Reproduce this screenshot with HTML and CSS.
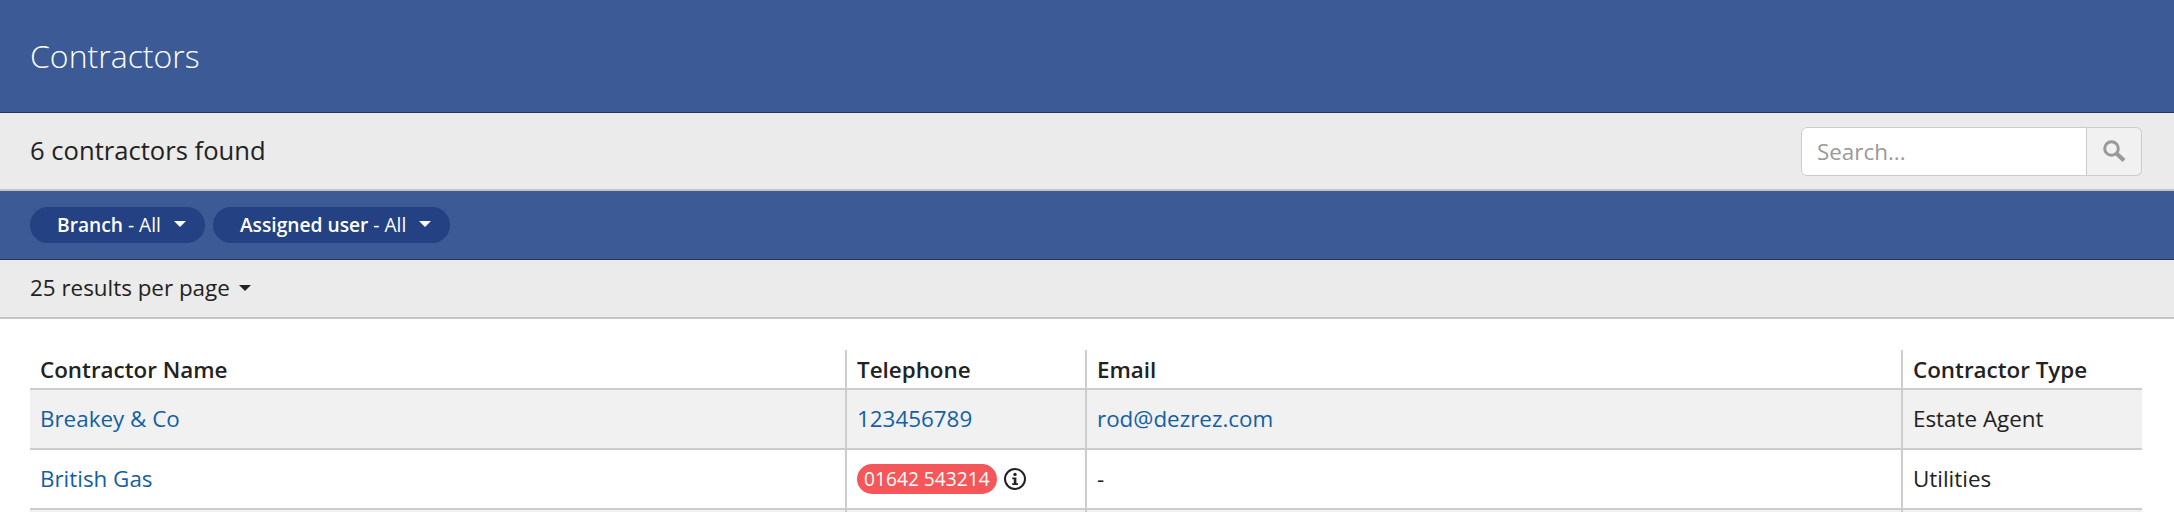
FILE: index.html

```html
<!DOCTYPE html>
<html lang="en">
<head>
    <meta charset="UTF-8">
    <title>Contractors</title>
    <link rel="stylesheet" href="styles.css">
</head>
<body>

    <div class="page-title">
        <h1>Contractors</h1>
    </div>

    <div class="results-bar">
        <span class="results-count">6 contractors found</span>
        <div class="search">
            <input class="search-input" type="text" placeholder="Search...">
            <button class="search-btn" aria-label="Search">
                <svg width="24" height="24" viewBox="0 0 24 24">
                    <circle cx="9.5" cy="9.5" r="6.8" fill="none" stroke="#999" stroke-width="3"/>
                    <path d="M14.5 14.5 L22 21.5" stroke="#999" stroke-width="4.2" fill="none"/>
                </svg>
            </button>
        </div>
    </div>

    <div class="filter-bar">
        <button class="filter-pill"><span><b>Branch</b> - All</span><i class="caret"></i></button>
        <button class="filter-pill"><span><b>Assigned user</b> - All</span><i class="caret"></i></button>
    </div>

    <div class="paging-bar">
        <span>25 results per page</span>
        <i class="caret caret-dark"></i>
    </div>

    <div class="table-wrap">
        <table class="contractors">
            <colgroup>
                <col class="col-name">
                <col class="col-tel">
                <col class="col-email">
                <col class="col-type">
            </colgroup>
            <thead>
                <tr>
                    <th>Contractor Name</th>
                    <th>Telephone</th>
                    <th>Email</th>
                    <th>Contractor Type</th>
                </tr>
            </thead>
            <tbody>
                <tr class="odd">
                    <td><a href="#">Breakey &amp; Co</a></td>
                    <td><a href="#">123456789</a></td>
                    <td><a href="#">rod@dezrez.com</a></td>
                    <td>Estate Agent</td>
                </tr>
                <tr>
                    <td><a href="#">British Gas</a></td>
                    <td>
                        <span class="phone-bad">01642 543214</span>
                        <svg class="info-icon" width="24" height="24" viewBox="0 0 24 24">
                            <circle cx="12" cy="12" r="10" fill="none" stroke="#222" stroke-width="2"/>
                            <circle cx="12" cy="7.4" r="1.7" fill="#222"/>
                            <path d="M9.2 10.4 H13.4 V16.2 H15 V18 H9.2 V16.2 H10.8 V12.2 H9.2 Z" fill="#222"/>
                        </svg>
                    </td>
                    <td>-</td>
                    <td>Utilities</td>
                </tr>
                <tr class="odd row-cut">
                    <td></td>
                    <td></td>
                    <td></td>
                    <td></td>
                </tr>
            </tbody>
        </table>
    </div>

</body>
</html>
```

FILE: styles.css

```css
* {
    box-sizing: border-box;
    margin: 0;
    padding: 0;
}
html, body {
    height: 512px;
    overflow: hidden;
}
body {
    font-family: "Open Sans", Arial, sans-serif;
    background-color: #fff;
    color: #222;
}
.page-title {
    height: 113px;
    padding: 0 30px 2px;
    display: flex;
    align-items: center;
    background-color: #3b5a96;
    border-bottom: 1px solid #1f3763;
}
.page-title h1 {
    font-size: 32px;
    font-weight: 300;
    color: #fff;
}
.results-bar {
    height: 78px;
    padding: 0 32px 0 30px;
    display: flex;
    align-items: center;
    justify-content: space-between;
    background-color: #ebebeb;
    border-bottom: 2px solid #c4c4c4;
}
.results-count {
    font-size: 25.6px;
    line-height: 1;
}
.search {
    display: flex;
    width: 341px;
    height: 49px;
}
.search-input {
    width: 286px;
    padding: 0 15px;
    font-family: inherit;
    font-size: 22.4px;
    color: #222;
    background-color: #fff;
    border: 1px solid #ccc;
    border-radius: 6px 0 0 6px;
}
.search-input::placeholder {
    color: #999;
    opacity: 1;
}
.search-btn {
    width: 55px;
    display: flex;
    align-items: center;
    justify-content: center;
    background-color: #f1f1f1;
    border: 1px solid #ccc;
    border-left: none;
    border-radius: 0 6px 6px 0;
}
.filter-bar {
    height: 69px;
    padding: 0 30px;
    display: flex;
    align-items: center;
    gap: 8px;
    background-color: #3b5a96;
    border-bottom: 1px solid #1f3763;
}
.filter-pill {
    height: 36px;
    padding: 0 19px 2px 27px;
    display: flex;
    align-items: center;
    font-family: inherit;
    font-size: 19.2px;
    color: #fff;
    background-color: #234183;
    border: none;
    border-radius: 18px;
}
.filter-pill b {
    font-weight: 600;
}
.caret {
    display: inline-block;
    margin-left: 13px;
    border-top: 6px solid #fff;
    border-left: 6px solid transparent;
    border-right: 6px solid transparent;
}
.caret-dark {
    margin-left: 9px;
    border-top-color: #222;
}
.paging-bar {
    height: 59px;
    padding: 0 30px 2px;
    display: flex;
    align-items: center;
    font-size: 22.4px;
    background-color: #ebebeb;
    border-bottom: 2px solid #c4c4c4;
}
.table-wrap {
    padding: 31px 32px 0 30px;
}
.contractors {
    width: 2112px;
    table-layout: fixed;
    border-collapse: collapse;
    font-size: 22.4px;
}
.col-name { width: 816px; }
.col-tel { width: 240px; }
.col-email { width: 816px; }
.col-type { width: 240px; }
.contractors th {
    height: 39px;
    padding: 2px 10px 0;
    font-weight: 600;
    text-align: left;
    line-height: 1;
    border-left: 2px solid #ccc;
    border-bottom: 2px solid #ccc;
}
.contractors td {
    height: 60px;
    padding: 0 10px;
    line-height: 1;
    border-left: 2px solid #ccc;
    border-bottom: 2px solid #ccc;
}
.contractors th:first-child,
.contractors td:first-child {
    border-left: none;
}
.contractors .row-cut td {
    height: 3px;
    padding: 0;
    border-bottom: none;
}
.contractors .odd td {
    background-color: #f1f1f1;
}
.contractors a {
    color: #135fa5;
    text-decoration: none;
}
.phone-bad {
    display: inline-block;
    height: 30px;
    padding: 0 7px;
    line-height: 29px;
    font-size: 19.2px;
    color: #fff;
    background-color: #f55659;
    border-radius: 15px;
    vertical-align: middle;
}
.info-icon {
    vertical-align: middle;
}
```
